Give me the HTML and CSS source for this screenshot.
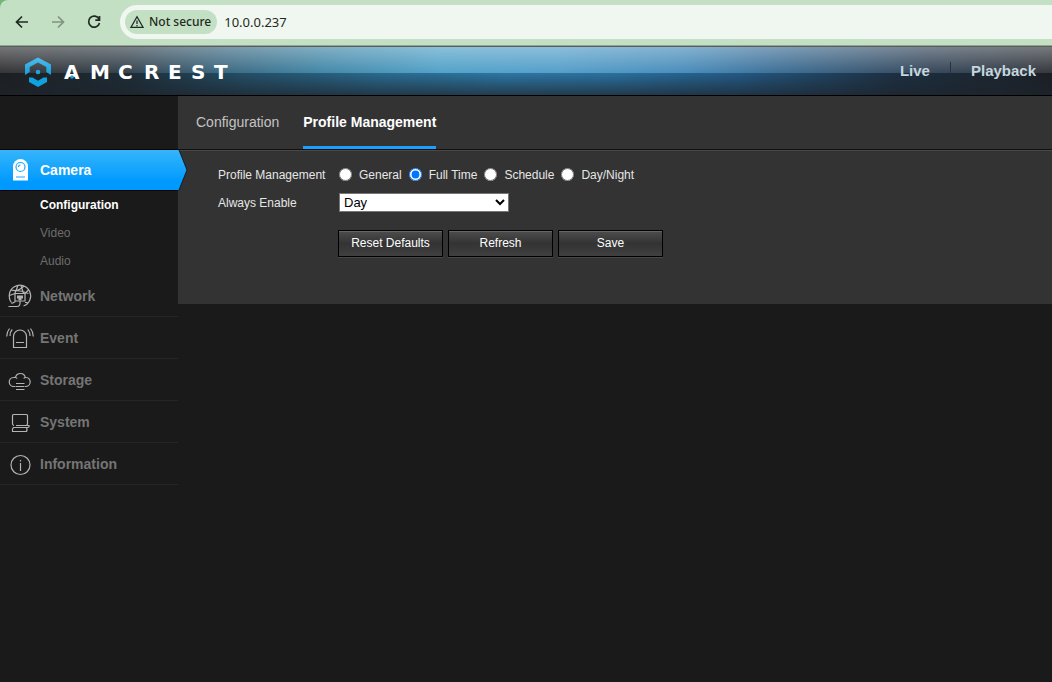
FILE: index.html
```
<!DOCTYPE html>
<html lang="en">
<head>
<meta charset="utf-8">
<title>Amcrest - Profile Management</title>
<link rel="stylesheet" href="styles.css">
</head>
<body>
<div class="window-top">
<div class="browser">
  <button class="nav-btn" type="button" aria-label="Back">
    <svg width="16" height="16" viewBox="0 0 16 16"><path d="M14 8H3M8 2.500 2.500 8 8 13.500"/></svg>
  </button>
  <button class="nav-btn nav-btn-off" type="button" aria-label="Forward">
    <svg width="16" height="16" viewBox="0 0 16 16"><path d="M2 8h11M8 2.500 13.500 8 8 13.500"/></svg>
  </button>
  <button class="nav-btn" type="button" aria-label="Reload">
    <svg width="16" height="16" viewBox="0 0 16 16"><path d="M13 5A5.500 5.500 0 1 0 13.500 9M13.500 2v4.200H9.300"/></svg>
  </button>
  <div class="address">
    <button class="security" type="button">
      <svg width="14" height="14" viewBox="0 0 14 14"><path d="M7 1.700 13 12.300H1ZM7 5.500V9M7 10v1.300"/></svg>
      Not secure
    </button>
    <input class="url" type="text" value="10.0.0.237" aria-label="Address">
  </div>
</div>
</div>

<header class="header">
  <svg class="logo" width="208" height="32" viewBox="0 0 208 32" role="img" aria-label="Amcrest">
    <defs>
      <linearGradient id="mark" x1="0" y1="0" x2="0" y2="1">
        <stop offset="0" stop-color="#52bdec"/><stop offset="1" stop-color="#119fdd"/>
      </linearGradient>
    </defs>
    <path fill="url(#mark)" d="M14 2.500 27 9.500V20L22.300 17V12L14 7.500 5.700 12V17L1 20V9.500Z"/>
    <path fill="#0ea3e0" d="M5 22.500H8.500L14 25.700 19.500 22.500H23V27L14 32 5 27Z"/>
    <circle cx="14" cy="17" r="2.300" fill="#1ba6e2"/>
    <text class="logo-text" y="24" x="40 66 94 120 144 167 190">AMCREST</text>
    <circle cx="48" cy="22" r="1.700" fill="#1ba6e2"/>
  </svg>
  <nav class="top-nav">
    <a href="#live">Live</a>
    <a href="#playback">Playback</a>
  </nav>
</header>

<div class="layout">
  <aside class="sidebar">
    <div class="sidebar-top"></div>
    <a class="menu-active" href="#camera">
      <svg class="arrow" width="10" height="40" viewBox="0 0 10 40">
        <defs><linearGradient id="tip" x1="0" y1="0" x2="0" y2="1"><stop offset="0" stop-color="#36b5fb"/><stop offset="0.800" stop-color="#0099ff"/></linearGradient></defs>
        <path d="M0 0h1l8 20-8 20H0Z" fill="url(#tip)"/>
        <path d="M1 0l8 20-8 20" fill="none" stroke="#10202c"/>
      </svg>
      <svg class="icon" width="28" height="28" viewBox="0 0 28 28">
        <path fill="#fff" d="M7 24.500V10.500a7.500 7.500 0 0 1 15 0V24.500Z"/>
        <g fill="none" stroke="#1ea6fd"><circle cx="14.500" cy="11" r="4.500" stroke-width="1.200"/><path d="M12.500 11a2 2 0 0 1 2-2M10 21h9"/></g>
      </svg>
      Camera
    </a>
    <nav class="submenu">
      <a class="sub-current" href="#configuration">Configuration</a>
      <a href="#video">Video</a>
      <a href="#audio">Audio</a>
    </nav>
    <nav class="menu">
      <a href="#network">
        <svg class="icon" width="28" height="28" viewBox="0 0 28 28">
          <path d="M5.500 20.500A10.700 10.700 0 1 1 17.500 24M5.500 21.500q2.500-1 4-2M19 20.500h2.500M12 3.500 9 11M15 3.500l2.500 8M5.500 8q6 2 12-3.500M9.500 8.500q6 0 13 3M3.500 13.500l5.500-2M22.500 8l-4 4"/>
          <path class="plug" d="M9 11.500h10v7.500H9Z"/><path class="fill" d="M11 13.500h6v3h-1.500V18h-3v-1.500H11Z"/><path d="M14 18.500V21q0 3.500-3 3.500H2.500"/>
        </svg>
        Network
      </a>
      <a href="#event">
        <svg class="icon" width="28" height="28" viewBox="0 0 28 28">
          <path d="M7.500 23.500V12.500a6.500 6.500 0 0 1 13 0v11ZM10 18.500h8M3.500 4.500Q.700 8 .700 12.500M6.200 5.500Q3.800 8 4 12M24.500 4.500q2.800 3.500 2.800 8M21.800 5.500q2.400 3 2.200 6.500"/>
        </svg>
        Event
      </a>
      <a href="#storage">
        <svg class="icon" width="28" height="28" viewBox="0 0 28 28">
          <path d="M9.500 20.500H8a4.500 4.500 0 0 1-.500-9q1-.200 2 0a5 5 0 0 1 9.800 0 4.500 4.500 0 0 1 .700 9h-1M9.500 11.500q1 .200 1.800 1M19.300 11.500q-1 0-1.500 1M10 17.500h8.500M10 20.500h8.500M10 23.500h8.500"/>
        </svg>
        Storage
      </a>
      <a href="#system">
        <svg class="icon" width="28" height="28" viewBox="0 0 28 28">
          <path d="M8 17.500q-1.500-.300-1.500-2v-8q0-1 1-1h13q1 0 1 1v8q0 1.700-1.500 2M10 17.500h13q.500 1.700-1 2H7.500q-1.500 1-1 4h14q1-2 0-4"/>
        </svg>
        System
      </a>
      <a href="#information">
        <svg class="icon" width="28" height="28" viewBox="0 0 28 28">
          <circle cx="14.500" cy="15" r="9.500"/><path d="M14.500 13v8M14.500 10v1.500"/>
        </svg>
        Information
      </a>
    </nav>
  </aside>

  <main class="panel">
    <nav class="tabs">
      <a href="#configuration-tab">Configuration</a>
      <a class="tab-current" href="#profile">Profile Management</a>
    </nav>
    <form class="form">
      <div class="row" role="radiogroup" aria-labelledby="profile-label">
        <span class="label" id="profile-label">Profile Management</span>
        <div class="radios">
          <label><input type="radio" name="profile">General</label>
          <label><input type="radio" name="profile" checked>Full Time</label>
          <label><input type="radio" name="profile">Schedule</label>
          <label><input type="radio" name="profile">Day/Night</label>
        </div>
      </div>
      <div class="row">
        <label class="label" for="always">Always Enable</label>
        <select class="select" id="always"><option>Day</option><option>Night</option></select>
      </div>
      <div class="buttons">
        <button type="button">Reset Defaults</button>
        <button type="button">Refresh</button>
        <button type="button">Save</button>
      </div>
    </form>
  </main>
</div>
</body>
</html>
```
FILE: styles.css
```
* { box-sizing: border-box; }

body {
  margin: 0;
  min-height: 100vh;
  display: flex;
  flex-direction: column;
  background: #1a1a1a;
  color: #e6e6e6;
  font: 12px/16px "Liberation Sans", Arial, sans-serif;
}

a { color: inherit; text-decoration: none; }
button, input, select { font: inherit; }

.window-top { background: #6fb874; }

.browser {
  display: flex;
  align-items: center;
  height: 46px;
  padding: 0 0 2px 14px;
  background: #c4e0c4;
  border-bottom: 1px solid #8fa68f;
  border-top-left-radius: 8px;
}

.nav-btn {
  width: 16px;
  height: 16px;
  margin-right: 20px;
  padding: 0;
  border: 0;
  background: none;
}

.nav-btn svg, .security svg {
  display: block;
  fill: none;
  stroke: #1f2a20;
  stroke-width: 1.7;
}

.nav-btn-off svg { stroke: #809280; }

.address {
  flex: 1;
  display: flex;
  align-items: center;
  height: 34px;
  margin-left: -2px;
  padding-left: 5px;
  background: #f0f7f0;
  border-radius: 17px 0 0 17px;
}

.security {
  display: flex;
  align-items: center;
  gap: 5px;
  height: 24px;
  padding: 0 6px 0 5px;
  border: 0;
  border-radius: 12px;
  background: #c4e0c4;
  color: #1f2a20;
  font: 500 12px/24px "Noto Sans", "Open Sans", sans-serif;
}

.security svg { stroke-width: 1.3; }

.url {
  flex: 1;
  min-width: 0;
  padding: 0 7px;
  border: 0;
  background: none;
  color: #1f2a20;
  font: 13px/24px "Noto Sans", "Open Sans", sans-serif;
}

.header {
  display: flex;
  align-items: center;
  justify-content: space-between;
  height: 50px;
  padding: 0 16px 0 24px;
  border-top: 1px solid #5c5c5c;
  border-bottom: 1px solid #000;
  background:
    linear-gradient(rgba(255, 255, 255, 0.32), rgba(255, 255, 255, 0)) top / 100% 26px no-repeat,
    linear-gradient(rgba(30, 36, 44, 0), rgba(30, 36, 44, 0.7)) bottom / 100% 22px no-repeat,
    linear-gradient(90deg, #343436, #35434d 12%, #3c6880 21%, #4489a9 31%, #53a2c8 42%, #559fca 53%, #4a8dbb 65%, #3e6f96 74%, #37495c 88%, #35383d) top / 100% 26px no-repeat,
    linear-gradient(90deg, #1d1e20, #1d2c36 12%, #234e66 23%, #2a6a8f 36%, #2c77a4 48%, #2a71a0 58%, #235a85 70%, #1c3042 85%, #1b1f24) bottom / 100% 22px no-repeat;
}

.logo-text {
  fill: #fff;
  font: bold 20px "DejaVu Sans", sans-serif;
}

.top-nav {
  display: flex;
  color: #c5d5df;
  font: bold 15px/18px "Liberation Sans", Arial, sans-serif;
}

.top-nav a + a {
  margin-left: 20px;
  padding-left: 21px;
  background: linear-gradient(#26323f, #26323f) left top / 1px 11px no-repeat;
}

.layout {
  flex: 1;
  display: flex;
  align-items: flex-start;
}

.sidebar { width: 178px; flex: none; }

.sidebar-top {
  height: 54px;
  border-bottom: 1px solid #000;
}

.icon {
  flex: none;
  fill: none;
  stroke: #b4b4b4;
  stroke-width: 1.2;
}

.icon .fill { fill: #b4b4b4; stroke: none; }
.icon .plug { fill: #1a1a1a; }

.menu-active {
  position: relative;
  display: flex;
  align-items: center;
  gap: 6px;
  height: 41px;
  padding-left: 6px;
  border-bottom: 1px solid #000;
  background: linear-gradient(#36b5fb, #0099ff 80%);
  color: #fff;
  font-size: 14px;
  font-weight: bold;
}

.menu-active .icon { stroke: none; }

.arrow {
  position: absolute;
  top: 0;
  left: 100%;
}

.submenu { display: flex; flex-direction: column; }

.submenu a {
  padding: 6px 0 6px 40px;
  color: #6d6d6d;
}

.submenu .sub-current { color: #fff; font-weight: bold; }

.menu a {
  display: flex;
  align-items: center;
  gap: 6px;
  height: 42px;
  padding-left: 6px;
  border-bottom: 1px solid #262626;
  color: #757575;
  font-size: 14px;
  font-weight: bold;
}

.panel {
  flex: 1;
  min-width: 0;
  background: #333;
}

.tabs {
  display: flex;
  gap: 24px;
  height: 54px;
  padding-left: 18px;
  border-bottom: 1px solid #111;
  color: #c4c4c4;
  font-size: 14px;
}

.tabs a { padding-top: 18px; }

.tabs .tab-current {
  border-bottom: 3px solid #1e9fff;
  color: #fff;
  font-weight: bold;
}

.form {
  padding: 14px 0 47px 40px;
  border-top: 1px solid #484848;
}

.row {
  display: flex;
  align-items: center;
  height: 19px;
  margin-bottom: 9px;
}

.label { width: 121px; }

.radios { display: flex; gap: 7px; }

.radios label { display: flex; align-items: center; }

.radios input {
  width: 13px;
  height: 13px;
  margin: 0 7px 0 0;
}

.select {
  width: 170px;
  height: 19px;
  padding: 0;
  border: 1px solid #767676;
  border-radius: 0;
  background: #fff;
  color: #000;
  font-size: 13px;
}

.buttons {
  display: flex;
  flex-wrap: wrap;
  gap: 5px;
  margin: 18px 0 0 120px;
}

.buttons button {
  width: 105px;
  height: 27px;
  padding: 0 0 2px;
  border: 1px solid #000;
  background: linear-gradient(#4d4d4d, #333 50%, #404040);
  box-shadow: inset 0 1px #666, 0 1px #484848;
  color: #fff;
}
```
